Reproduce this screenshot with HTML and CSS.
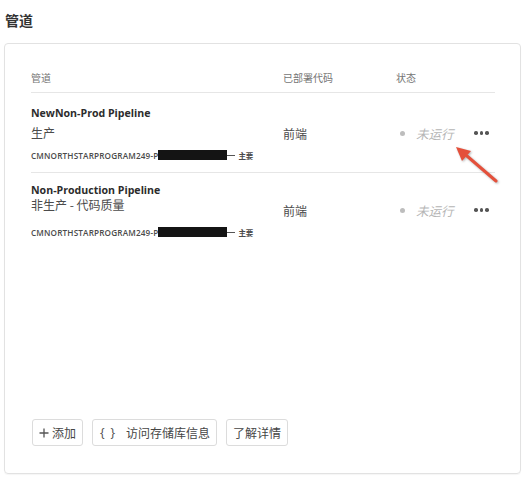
FILE: index.html
```html
<!DOCTYPE html>
<html lang="zh">
<head>
<meta charset="utf-8">
<title>管道</title>
<link rel="stylesheet" href="styles.css">
</head>
<body>
<div class="page">
  <h1 class="title">管道</h1>
  <section class="card">
    <div class="table">
      <div class="thead">
        <div>管道</div>
        <div>已部署代码</div>
        <div>状态</div>
        <div></div>
      </div>
      <div class="row row-first">
        <div class="cell-name">
          <div class="name">NewNon-Prod Pipeline</div>
          <div class="sub">生产</div>
          <div class="repo"><span class="repo-id">CMNORTHSTARPROGRAM249-P</span><span class="redact"></span><span class="dash"></span><span class="branch">主要</span></div>
        </div>
        <div class="code">前端</div>
        <div class="status"><span class="dot"></span><span class="state">未运行</span></div>
        <div class="more"><span></span><span></span><span></span></div>
      </div>
      <div class="row row-second">
        <div class="cell-name">
          <div class="name">Non-Production Pipeline</div>
          <div class="sub">非生产 - 代码质量</div>
          <div class="repo"><span class="repo-id">CMNORTHSTARPROGRAM249-P</span><span class="redact"></span><span class="dash"></span><span class="branch">主要</span></div>
        </div>
        <div class="code">前端</div>
        <div class="status"><span class="dot"></span><span class="state">未运行</span></div>
        <div class="more"><span></span><span></span><span></span></div>
      </div>
    </div>
    <div class="actions">
      <button class="btn"><svg class="plus" viewBox="0 0 10 10" width="10" height="10"><path d="M5 0.5V9.5M0.5 5H9.5" stroke="#555" stroke-width="1.3" fill="none"/></svg>添加</button>
      <button class="btn"><span class="braces"><span>{</span><span>}</span></span>访问存储库信息</button>
      <button class="btn">了解详情</button>
    </div>
  </section>
  <svg class="annotation" width="526" height="479" viewBox="0 0 526 479">
    <line x1="496" y1="181" x2="467" y2="156" stroke="#e4503b" stroke-width="3" stroke-linecap="round"/>
    <polygon points="456,147 471,151 462,161" fill="#e4503b"/>
  </svg>
</div>
</body>
</html>
```

FILE: styles.css
```css
html, body {
  margin: 0;
  padding: 0;
  background: #ffffff;
}

body {
  font-family: "Noto Sans", "Noto Sans CJK SC", sans-serif;
  color: #4b4b4b;
}

.page {
  position: relative;
  width: 526px;
  height: 479px;
  box-sizing: border-box;
  padding: 10px 5px 5px 4px;
}

.title {
  margin: 0 0 13px 1px;
  font-family: "Noto Sans CJK SC", sans-serif;
  font-size: 14px;
  line-height: 20px;
  font-weight: 700;
  color: #333333;
}

.card {
  box-sizing: border-box;
  height: 431px;
  border: 1px solid #e2e2e2;
  border-radius: 4px;
  padding: 21px 25px 27px 26px;
  display: flex;
  flex-direction: column;
  box-shadow: 0 1px 1px rgba(0, 0, 0, 0.04);
}

.table {
  flex: 1;
}

.thead,
.row {
  display: grid;
  grid-template-columns: 252px 113px 78px 1fr;
}

.thead {
  box-sizing: border-box;
  height: 28px;
  align-items: center;
  border-bottom: 1px solid #e6e6e6;
  font-family: "Noto Sans CJK SC", sans-serif;
  font-size: 10px;
  color: #747474;
  padding-bottom: 2px;
}

.row {
  align-items: center;
}

.row-first {
  border-bottom: 1px solid #e6e6e6;
  padding: 12px 0 11px;
}

.row-second {
  padding: 9px 0 15px;
}

.cell-name {
  display: flex;
  flex-direction: column;
}

.name {
  font-family: "Open Sans", sans-serif;
  font-weight: 700;
  font-size: 10.6px;
  line-height: 16px;
  color: #2c2c2c;
}

.sub {
  font-family: "Noto Sans CJK SC", sans-serif;
  font-size: 12px;
  line-height: 20px;
  margin-top: 2px;
  color: #4b4b4b;
}

.repo {
  display: flex;
  align-items: center;
  height: 12px;
  margin-top: 6px;
  font-size: 8px;
  color: #4b4b4b;
}

.row-second .sub {
  margin-top: -3px;
}

.row-second .repo {
  margin-top: 11px;
}

.repo-id {
  font-family: "Open Sans", sans-serif;
  font-weight: 600;
  letter-spacing: 0.15px;
  font-size: 8.2px;
}

.redact {
  display: inline-block;
  width: 69px;
  height: 10px;
  background: #141414;
}

.dash {
  display: inline-block;
  width: 8px;
  height: 1px;
  background: #555;
  margin: 0 3px 0 0;
}

.branch {
  font-family: "Noto Sans CJK SC", sans-serif;
  font-size: 7.5px;
  font-weight: 700;
}

.code {
  font-family: "Noto Sans CJK SC", sans-serif;
  font-size: 12px;
  color: #4b4b4b;
}

.status {
  display: flex;
  align-items: center;
}

.dot {
  width: 5px;
  height: 5px;
  border-radius: 50%;
  background: #bdbdbd;
  margin: 0 11px 0 4px;
}

.state {
  font-family: "Noto Sans CJK SC", sans-serif;
  font-size: 12.5px;
  font-style: italic;
  color: #b5b5b5;
}

.more {
  display: flex;
  gap: 2px;
}

.more span {
  width: 3.5px;
  height: 3.5px;
  border-radius: 50%;
  background: #555;
}

.actions {
  display: flex;
  gap: 9px;
  padding-left: 1px;
}

.btn {
  box-sizing: border-box;
  height: 27px;
  display: inline-flex;
  align-items: center;
  padding: 0 6px;
  border: 1px solid #dcdcdc;
  border-radius: 3px;
  background: #fff;
  font-family: "Noto Sans CJK SC", sans-serif;
  font-size: 12px;
  color: #464646;
}

.plus {
  margin-right: 3px;
}

.braces {
  display: inline-flex;
  justify-content: space-between;
  width: 15px;
  margin: 0 11px 0 1px;
  font-family: "Noto Sans", sans-serif;
  font-size: 12px;
  color: #555;
}

.annotation {
  position: absolute;
  left: 0;
  top: 0;
  pointer-events: none;
  filter: drop-shadow(1px 1px 1px rgba(0, 0, 0, 0.3));
}
```
